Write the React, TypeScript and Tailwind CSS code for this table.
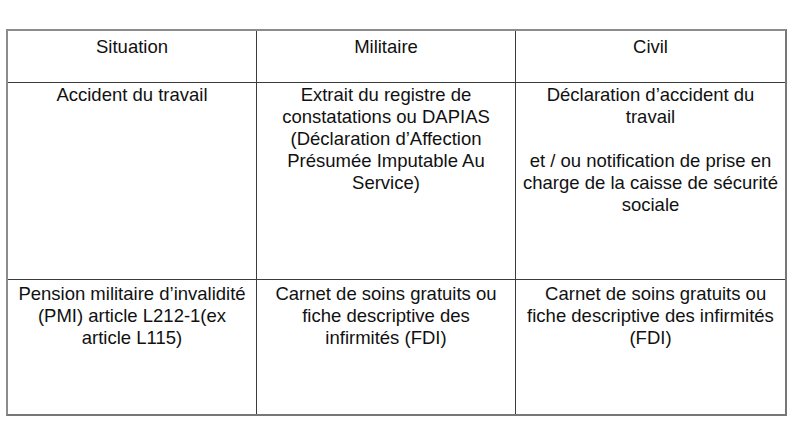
const rows: { cells: string[][]; height: string; pad: string }[] = [
  {
    height: "h-[52px]",
    pad: "pt-[5px]",
    cells: [["Situation"], ["Militaire"], ["Civil"]],
  },
  {
    height: "h-[197px]",
    pad: "pt-[1px]",
    cells: [
      ["Accident du travail"],
      [
        "Extrait du registre de",
        "constatations ou DAPIAS",
        "(Déclaration d’Affection",
        "Présumée Imputable Au",
        "Service)",
      ],
      [
        "Déclaration d’accident du",
        "travail",
        "\u00a0",
        "et / ou notification de prise en",
        "charge de la caisse de sécurité",
        "sociale",
      ],
    ],
  },
  {
    height: "h-[134px]",
    pad: "pt-[3px]",
    cells: [
      [
        "Pension militaire d’invalidité",
        "(PMI) article L212-1(ex",
        "article L115)",
      ],
      [
        "Carnet de soins gratuits ou",
        "fiche descriptive des",
        "infirmités (FDI)",
      ],
      [
        "\u00a0\u00a0Carnet de soins gratuits ou",
        "fiche descriptive des infirmités",
        "(FDI)",
      ],
    ],
  },
];

const colWidths = ["w-[249px]", "w-[259px]", "flex-1"];

export default function App() {
  return (
    <div className="w-[792px] h-[445px] bg-white pt-[29px] pl-[6px] font-['Liberation_Sans',Arial,sans-serif] text-[18.5px] leading-[22px] text-[#111]">
      <div className="w-[781px] border-2 border-[#8c8c8c] border-r-[#777] border-b-[#777] flex flex-col">
        {rows.map((row, ri) => (
          <div
            key={ri}
            className={`flex ${row.height} ${
              ri < rows.length - 1 ? "border-b border-[#3c3c3c]" : ""
            }`}
          >
            {row.cells.map((lines, ci) => (
              <div
                key={ci}
                className={`${colWidths[ci]} ${row.pad} flex flex-col items-center ${
                  ci < 2 ? "border-r border-[#3c3c3c]" : ""
                }`}
              >
                {lines.map((l, li) => (
                  <span key={li} className="whitespace-pre text-center">
                    {l}
                  </span>
                ))}
              </div>
            ))}
          </div>
        ))}
      </div>
    </div>
  );
}
